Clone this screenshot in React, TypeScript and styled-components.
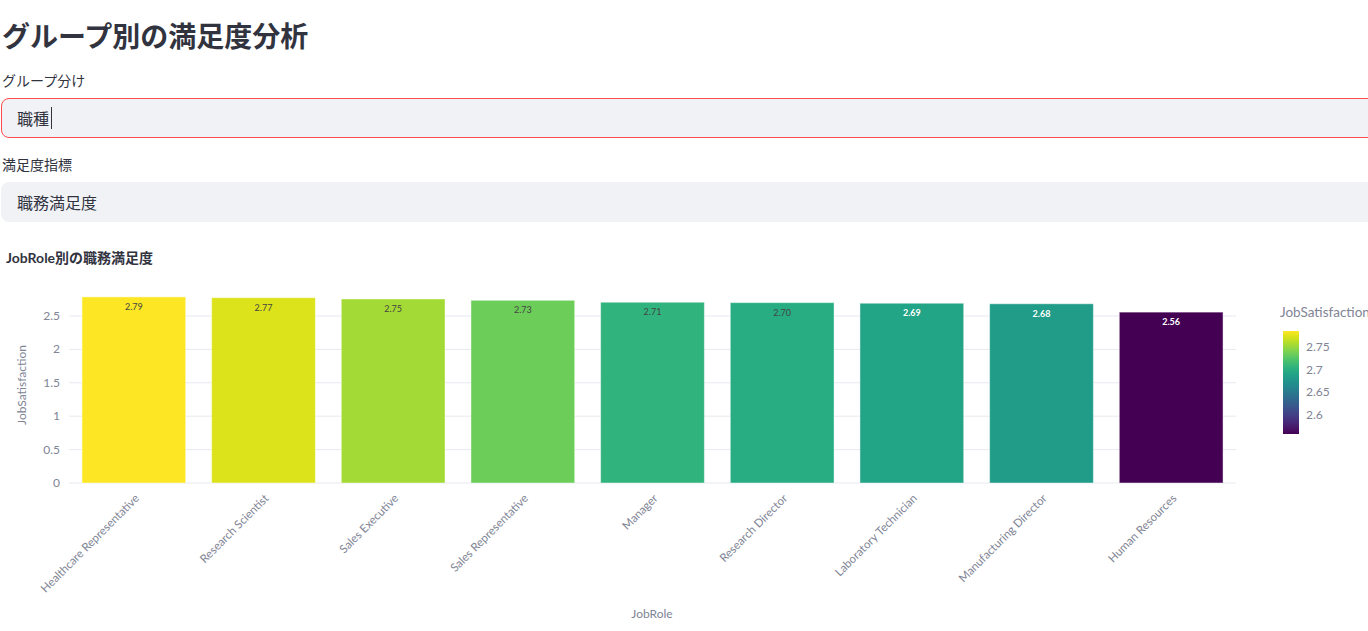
import styled, { createGlobalStyle } from 'styled-components';

const GlobalStyle = createGlobalStyle`
  html, body {
    margin: 0;
    padding: 0;
    background: #ffffff;
    overflow: hidden;
  }
  body {
    font-family: "Noto Sans CJK JP", "Noto Sans", sans-serif;
    color: #31333f;
  }
`;

const Main = styled.main`
  width: 1400px;
  padding-left: 1px;
  display: flex;
  flex-direction: column;
`;

const Title = styled.h1`
  margin: 15px 0 0 1px;
  font-size: 28px;
  line-height: 40px;
  font-weight: 700;
  color: #31333f;
`;

const Field = styled.div<{ $top: number }>`
  display: flex;
  flex-direction: column;
  gap: 8px;
  margin-top: ${(p) => p.$top}px;
`;

const Label = styled.label`
  font-size: 14px;
  line-height: 20px;
  padding-left: 1px;
  color: #31333f;
`;

const Box = styled.div<{ $focused?: boolean }>`
  height: 40px;
  box-sizing: border-box;
  display: flex;
  align-items: center;
  padding-left: 15px;
  background: #f0f2f6;
  border: 1px solid ${(p) => (p.$focused ? '#ff4b4b' : '#f0f2f6')};
  border-radius: 8px;
  font-size: 16px;
  color: #31333f;
`;

const Caret = styled.span`
  display: inline-block;
  width: 1px;
  height: 22px;
  margin-left: 2px;
  background: #31333f;
`;

const Chart = styled.svg`
  display: block;
  margin-top: 18px;
  margin-left: -1px;
  font-family: Lato, "Noto Sans CJK JP", sans-serif;
`;

type Row = { role: string; value: number };

const data: Row[] = [
  { role: 'Healthcare Representative', value: 2.786 },
  { role: 'Research Scientist', value: 2.774 },
  { role: 'Sales Executive', value: 2.755 },
  { role: 'Sales Representative', value: 2.735 },
  { role: 'Manager', value: 2.706 },
  { role: 'Research Director', value: 2.7 },
  { role: 'Laboratory Technician', value: 2.691 },
  { role: 'Manufacturing Director', value: 2.683 },
  { role: 'Human Resources', value: 2.558 },
];

const viridis: [number, string][] = [
  [0, '#440154'], [0.0627, '#48186a'], [0.1255, '#472d7b'], [0.1882, '#424086'],
  [0.251, '#3b528b'], [0.3137, '#33638d'], [0.3765, '#2c728e'], [0.4392, '#26828e'],
  [0.502, '#21918c'], [0.5647, '#1fa088'], [0.6275, '#28ae80'], [0.6902, '#3fbc73'],
  [0.7529, '#5ec962'], [0.8157, '#84d44b'], [0.8784, '#addc30'], [0.9412, '#d8e219'],
  [1, '#fde725'],
];

const hex = (c: string) => [1, 3, 5].map((i) => parseInt(c.slice(i, i + 2), 16));

const colorAt = (t: number): string => {
  for (let i = 1; i < viridis.length; i++) {
    const [p1, c1] = viridis[i];
    const [p0, c0] = viridis[i - 1];
    if (t <= p1) {
      const f = (t - p0) / (p1 - p0);
      const a = hex(c0);
      const b = hex(c1);
      const m = a.map((v, k) => Math.round(v + (b[k] - v) * f));
      return `rgb(${m.join(',')})`;
    }
  }
  return viridis[viridis.length - 1][1];
};

// chart geometry, in svg coordinates (svg top sits at page y = 240)
const zeroY = 243;
const unit = 66.8;
const plotLeft = 69;
const plotRight = 1236;
const slot = (plotRight - plotLeft) / data.length;
const minV = 2.558;
const maxV = 2.786;
const yTicks = [0, 0.5, 1, 1.5, 2, 2.5];
const cbTop = 91;
const cbBottom = 194;
const cbTicks = [2.6, 2.65, 2.7, 2.75];
const cbY = (v: number) => cbBottom - ((v - minV) / (maxV - minV)) * (cbBottom - cbTop);

const BarChart = () => (
  <Chart width={1400} height={391} viewBox="0 0 1400 391">
    <defs>
      <linearGradient id="viridis" x1="0" y1="1" x2="0" y2="0">
        {viridis.map(([p, c]) => (
          <stop key={p} offset={p} stopColor={c} />
        ))}
      </linearGradient>
    </defs>

    <text x={6} y={23} fontSize={14} fontWeight={700} fill="#31333f">
      JobRole別の職務満足度
    </text>

    {yTicks.map((t) => (
      <g key={t}>
        <line x1={plotLeft} x2={plotRight} y1={zeroY - t * unit} y2={zeroY - t * unit} stroke="#e6e9ef" strokeWidth={1} />
        <text x={60} y={zeroY - t * unit + 4} fontSize={12} fill="#808495" textAnchor="end">
          {t}
        </text>
      </g>
    ))}

    <text transform="translate(26 145) rotate(-90)" fontSize={12} fill="#808495" textAnchor="middle">
      JobSatisfaction
    </text>

    {data.map((d, i) => {
      const cx = plotLeft + slot * (i + 0.5);
      const w = slot * 0.8;
      const top = zeroY - d.value * unit;
      const t = (d.value - minV) / (maxV - minV);
      const dark = t < 0.6;
      return (
        <g key={d.role}>
          <rect
            x={cx - w / 2}
            y={top}
            width={w}
            height={zeroY - top}
            fill={colorAt(t)}
            stroke="#ffffff"
            strokeOpacity={0.45}
            strokeWidth={1}
          />
          <text
            x={cx}
            y={top + 13}
            fontSize={9}
            textAnchor="middle"
            fill={dark ? '#ffffff' : '#444444'}
            fontWeight={dark ? 700 : 400}
          >
            {d.value.toFixed(2)}
          </text>
          <text
            transform={`translate(${cx + 6} ${zeroY + 16}) rotate(-45)`}
            fontSize={11.5}
            fill="#808495"
            textAnchor="end"
          >
            {d.role}
          </text>
        </g>
      );
    })}

    <text x={652} y={378} fontSize={12} fill="#808495" textAnchor="middle">
      JobRole
    </text>

    <text x={1280} y={77} fontSize={13.5} fill="#808495">
      JobSatisfaction
    </text>
    <rect x={1283} y={cbTop} width={16} height={cbBottom - cbTop} fill="url(#viridis)" />
    {cbTicks.map((v) => (
      <text key={v} x={1306} y={cbY(v) + 4} fontSize={12} fill="#808495">
        {v}
      </text>
    ))}
  </Chart>
);

export default function App() {
  return (
    <>
      <GlobalStyle />
      <Main>
        <Title>グループ別の満足度分析</Title>
        <Field $top={15}>
          <Label>グループ分け</Label>
          <Box $focused>
            職種
            <Caret />
          </Box>
        </Field>
        <Field $top={16}>
          <Label>満足度指標</Label>
          <Box>職務満足度</Box>
        </Field>
        <BarChart />
      </Main>
    </>
  );
}
